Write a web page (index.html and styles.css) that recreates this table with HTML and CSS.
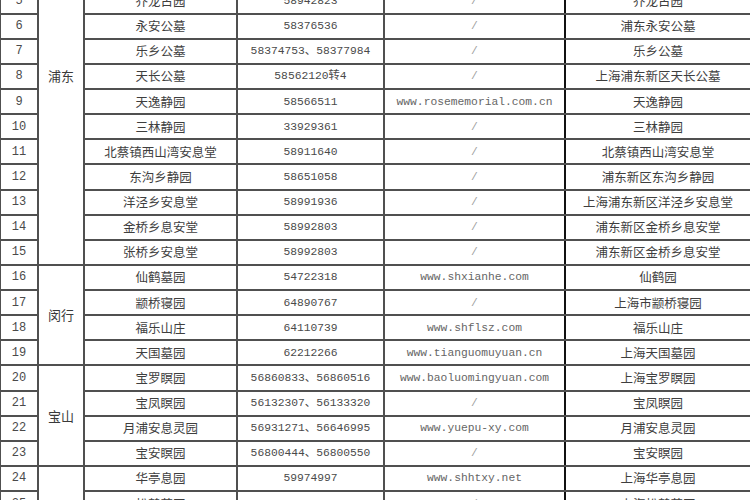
FILE: index.html
```html
<!DOCTYPE html>
<html lang="zh-CN">
<head>
<meta charset="utf-8">
<title>上海公墓一览</title>
<link rel="stylesheet" href="styles.css">
</head>
<body>
<table class="grid">
  <colgroup>
    <col class="c-no"><col class="c-dist"><col class="c-name"><col class="c-tel"><col class="c-web"><col class="c-full">
  </colgroup>
  <tbody>
    <tr><td class="no">1</td><td class="dist" rowspan="15">浦东</td><td class="cn">海港陵园</td><td class="tel">58091111</td><td class="web">www.haigang.com</td><td class="cn full">上海海港陵园</td></tr>
    <tr><td class="no">2</td><td class="cn">滨海古园</td><td class="tel">58053888</td><td class="web">www.binhaiguyuan.com</td><td class="cn full">上海滨海古园</td></tr>
    <tr><td class="no">3</td><td class="cn">永久公墓</td><td class="tel">58121234</td><td class="web slash">/</td><td class="cn full">永久公墓</td></tr>
    <tr><td class="no">4</td><td class="cn">长乐墓园</td><td class="tel">58235566</td><td class="web slash">/</td><td class="cn full">长乐墓园</td></tr>
    <tr><td class="no">5</td><td class="cn">乔龙古园</td><td class="tel">58942823</td><td class="web slash">/</td><td class="cn full">乔龙古园</td></tr>
    <tr><td class="no">6</td><td class="cn">永安公墓</td><td class="tel">58376536</td><td class="web slash">/</td><td class="cn full">浦东永安公墓</td></tr>
    <tr><td class="no">7</td><td class="cn">乐乡公墓</td><td class="tel">58374753、58377984</td><td class="web slash">/</td><td class="cn full">乐乡公墓</td></tr>
    <tr><td class="no">8</td><td class="cn">天长公墓</td><td class="tel">58562120转4</td><td class="web slash">/</td><td class="cn full">上海浦东新区天长公墓</td></tr>
    <tr><td class="no">9</td><td class="cn">天逸静园</td><td class="tel">58566511</td><td class="web">www.rosememorial.com.cn</td><td class="cn full">天逸静园</td></tr>
    <tr><td class="no">10</td><td class="cn">三林静园</td><td class="tel">33929361</td><td class="web slash">/</td><td class="cn full">三林静园</td></tr>
    <tr><td class="no">11</td><td class="cn">北蔡镇西山湾安息堂</td><td class="tel">58911640</td><td class="web slash">/</td><td class="cn full">北蔡镇西山湾安息堂</td></tr>
    <tr><td class="no">12</td><td class="cn">东沟乡静园</td><td class="tel">58651058</td><td class="web slash">/</td><td class="cn full">浦东新区东沟乡静园</td></tr>
    <tr><td class="no">13</td><td class="cn">洋泾乡安息堂</td><td class="tel">58991936</td><td class="web slash">/</td><td class="cn full">上海浦东新区洋泾乡安息堂</td></tr>
    <tr><td class="no">14</td><td class="cn">金桥乡息安堂</td><td class="tel">58992803</td><td class="web slash">/</td><td class="cn full">浦东新区金桥乡息安堂</td></tr>
    <tr><td class="no">15</td><td class="cn">张桥乡安息堂</td><td class="tel">58992803</td><td class="web slash">/</td><td class="cn full">浦东新区金桥乡息安堂</td></tr>
    <tr><td class="no">16</td><td class="dist" rowspan="4">闵行</td><td class="cn">仙鹤墓园</td><td class="tel">54722318</td><td class="web">www.shxianhe.com</td><td class="cn full">仙鹤园</td></tr>
    <tr><td class="no">17</td><td class="cn">颛桥寝园</td><td class="tel">64890767</td><td class="web slash">/</td><td class="cn full">上海市颛桥寝园</td></tr>
    <tr><td class="no">18</td><td class="cn">福乐山庄</td><td class="tel">64110739</td><td class="web">www.shflsz.com</td><td class="cn full">福乐山庄</td></tr>
    <tr><td class="no">19</td><td class="cn">天国墓园</td><td class="tel">62212266</td><td class="web">www.tianguomuyuan.cn</td><td class="cn full">上海天国墓园</td></tr>
    <tr><td class="no">20</td><td class="dist" rowspan="4">宝山</td><td class="cn">宝罗瞑园</td><td class="tel">56860833、56860516</td><td class="web">www.baoluomingyuan.com</td><td class="cn full">上海宝罗瞑园</td></tr>
    <tr><td class="no">21</td><td class="cn">宝凤瞑园</td><td class="tel">56132307、56133320</td><td class="web slash">/</td><td class="cn full">宝凤瞑园</td></tr>
    <tr><td class="no">22</td><td class="cn">月浦安息灵园</td><td class="tel">56931271、56646995</td><td class="web">www.yuepu-xy.com</td><td class="cn full">月浦安息灵园</td></tr>
    <tr><td class="no">23</td><td class="cn">宝安瞑园</td><td class="tel">56800444、56800550</td><td class="web slash">/</td><td class="cn full">宝安瞑园</td></tr>
    <tr><td class="no">24</td><td class="dist" rowspan="4">嘉定</td><td class="cn">华亭息园</td><td class="tel">59974997</td><td class="web">www.shhtxy.net</td><td class="cn full">上海华亭息园</td></tr>
    <tr><td class="no">25</td><td class="cn">松鹤墓园</td><td class="tel">59528999</td><td class="web slash">/</td><td class="cn full">上海松鹤墓园</td></tr>
    <tr><td class="no">26</td><td class="cn">长安墓园</td><td class="tel">59524181</td><td class="web slash">/</td><td class="cn full">长安墓园</td></tr>
    <tr><td class="no">27</td><td class="cn">清竹园</td><td class="tel">59906111</td><td class="web slash">/</td><td class="cn full">清竹园</td></tr>
  </tbody>
</table>
</body>
</html>
```
FILE: styles.css
```css
html, body {
  margin: 0;
  padding: 0;
  background: #ffffff;
  overflow: hidden;
  height: 500px;
}

.grid {
  width: 751px;
  margin-top: -113px;
  margin-left: -1px;
  border-collapse: collapse;
  table-layout: fixed;
  font-family: "Noto Sans CJK SC", "Liberation Sans", sans-serif;
  font-size: 12.5px;
  color: #3e3e3e;
}

.c-no { width: 38px; }
.c-dist { width: 46px; }
.c-name { width: 153px; }
.c-tel { width: 147px; }
.c-web { width: 181px; }
.c-full { width: 186px; }

.grid td {
  height: 23.13px;
  padding: 0;
  border: 2px solid #505050;
  text-align: center;
  vertical-align: middle;
  white-space: nowrap;
  overflow: hidden;
  line-height: 14px;
}

.grid td.web {
  border-right: 2px solid #111111;
}

.grid td.no,
.grid td.tel {
  font-family: "Liberation Mono", "Noto Sans CJK SC", monospace;
  font-size: 11.3px;
  color: #4a4a4a;
}

.grid td.no {
  font-size: 12px;
}

.grid td.web {
  font-family: "Liberation Mono", monospace;
  font-size: 11.3px;
  color: #666666;
}

.grid td.slash {
  color: #a0a0a0;
}

.grid td.dist {
  font-size: 13px;
  color: #3a3a3a;
}
```
